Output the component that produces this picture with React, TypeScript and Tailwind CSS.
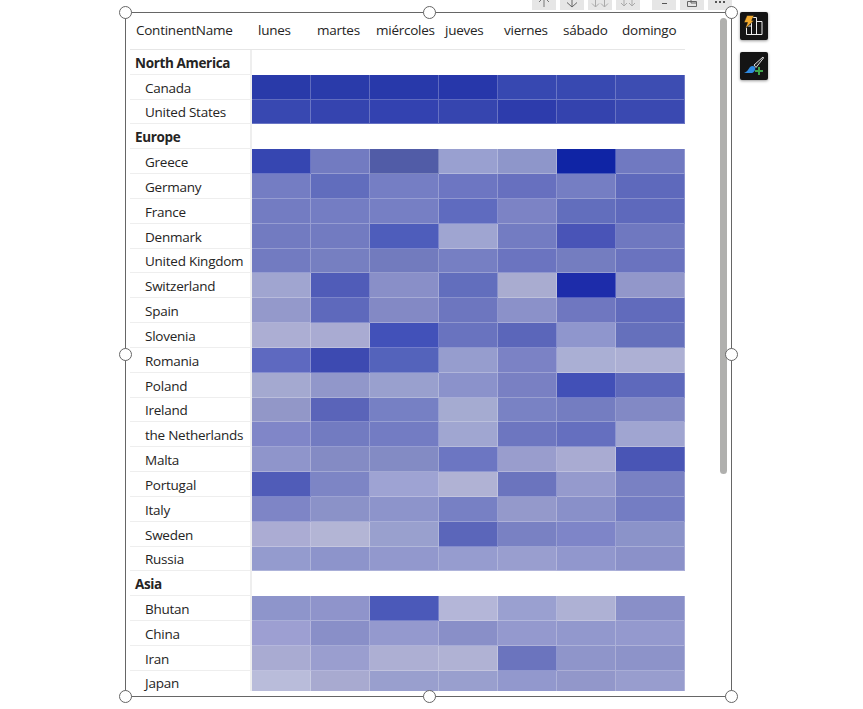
const days = [
  { name: "lunes", w: "w-[59px]" },
  { name: "martes", w: "w-[59px]" },
  { name: "miércoles", w: "w-[69px]" },
  { name: "jueves", w: "w-[59px]" },
  { name: "viernes", w: "w-[59px]" },
  { name: "sábado", w: "w-[59px]" },
  { name: "domingo", w: "w-[69px]" },
];

type Row = { label: string; group?: boolean; cells?: string[] };

const rows: Row[] = [
  { label: "North America", group: true },
  { label: "Canada", cells: ["#2b3a9f", "#2c3ba0", "#2a39a0", "#2937a0", "#3948a8", "#3a49a8", "#3f4da9"] },
  { label: "United States", cells: ["#3a48a8", "#3744a6", "#3542a6", "#3845a6", "#2f3ca2", "#3643a5", "#3c49a8"] },
  { label: "Europe", group: true },
  { label: "Greece", cells: ["#3846a8", "#737bbb", "#525ca0", "#9aa0cc", "#8f96c5", "#11249a", "#7179bb"] },
  { label: "Germany", cells: ["#757dbd", "#626db6", "#767ebe", "#6e76bb", "#6870b8", "#767ebd", "#5f69b5"] },
  { label: "France", cells: ["#747cbc", "#757dbd", "#777fbe", "#606bb8", "#7d83bf", "#636eb6", "#5f69b5"] },
  { label: "Denmark", cells: ["#737bbb", "#737bbb", "#505db3", "#a0a5cd", "#747cbc", "#4a54ae", "#7078ba"] },
  { label: "United Kingdom", cells: ["#737bbb", "#777fbb", "#737bb8", "#777fbd", "#6c74b9", "#757dba", "#6b73b8"] },
  { label: "Switzerland", cells: ["#a1a5cc", "#515cb0", "#8a8fc3", "#636eb6", "#a9accd", "#1f2d9f", "#9397c6"] },
  { label: "Spain", cells: ["#9599c7", "#5f69b5", "#8489c0", "#6e76b9", "#8c91c4", "#7077ba", "#626bb5"] },
  { label: "Slovenia", cells: ["#acaed0", "#a9abcf", "#4451b0", "#6a73b8", "#5c66b3", "#9096c8", "#6670b5"] },
  { label: "Romania", cells: ["#5f69b8", "#3f4aa8", "#5663b3", "#979dca", "#7c82bf", "#abafd1", "#adb0d1"] },
  { label: "Poland", cells: ["#a5a9cd", "#9297c6", "#9aa0ca", "#8c92c6", "#7a80bd", "#4450ae", "#5f69b5"] },
  { label: "Ireland", cells: ["#9397c4", "#5b64b2", "#7780be", "#a6abce", "#7a82be", "#757dbb", "#8389c0"] },
  { label: "the Netherlands", cells: ["#8186c2", "#737bbb", "#747cbd", "#a1a6cd", "#6e76ba", "#666fb8", "#a1a5cd"] },
  { label: "Malta", cells: ["#9095c6", "#858bbf", "#848bbf", "#6d76bb", "#9a9dc9", "#a9abcf", "#4a55ad"] },
  { label: "Portugal", cells: ["#515cb0", "#7e85bf", "#9fa3cf", "#b0b2d1", "#6c74b8", "#969ac9", "#7a81bd"] },
  { label: "Italy", cells: ["#7f85c0", "#8c92c3", "#8e94c6", "#7880be", "#9599c7", "#8a90c4", "#757dbd"] },
  { label: "Sweden", cells: ["#abacd0", "#b3b5d2", "#9aa0ca", "#5c66b3", "#7a81bd", "#7f85c2", "#8c93c4"] },
  { label: "Russia", cells: ["#959bca", "#8e94c6", "#9398c8", "#979ccb", "#9a9ecb", "#9297c8", "#8c91c4"] },
  { label: "Asia", group: true },
  { label: "Bhutan", cells: ["#8f95c6", "#9094c6", "#4d59b1", "#b4b6d5", "#9ba0cc", "#aeb1d1", "#8a8fc3"] },
  { label: "China", cells: ["#9d9fce", "#8a8fc3", "#9599c9", "#8a8fc3", "#9599c9", "#9398c8", "#9599c9"] },
  { label: "Iran", cells: ["#a9abcf", "#9b9ecb", "#adafd0", "#b0b2d1", "#6c74b8", "#9095c5", "#8e93c4"] },
  { label: "Japan", cells: ["#b9bcd7", "#a8aacd", "#9a9fca", "#9a9fca", "#9398c8", "#9397c6", "#999dca"] },
];

function Handle({ pos }: { pos: string }) {
  return <div className={`absolute size-[13px] rounded-full border border-[#666] bg-white ${pos}`} />;
}

function ToolButton({ children }: { children?: React.ReactNode }) {
  return <div className="flex h-[10px] w-6 items-start justify-center overflow-hidden bg-[#e6e6e6]">{children}</div>;
}

function Toolbar() {
  return (
    <div className="absolute top-[-13px] right-[-1px] flex gap-1">
      <ToolButton>
        <svg width="14" height="10" viewBox="0 0 14 10" fill="none" stroke="#777" strokeWidth="1">
          <path d="M7 7V-3M2 2l5-5 5 5" />
        </svg>
      </ToolButton>
      <ToolButton>
        <svg width="14" height="10" viewBox="0 0 14 10" fill="none" stroke="#666" strokeWidth="1">
          <path d="M7 -2v9M2 2.500L7 7l5-4.500" />
        </svg>
      </ToolButton>
      <ToolButton>
        <svg width="18" height="10" viewBox="0 0 18 10" fill="none" stroke="#aaa" strokeWidth="1">
          <path d="M4.500 -2v9M1 3.500L4.500 7 8 3.500M13.500 -2v9M10 3.500L13.500 7 17 3.500" />
        </svg>
      </ToolButton>
      <ToolButton>
        <svg width="16" height="10" viewBox="0 0 16 10" fill="none" stroke="#aaa" strokeWidth="1">
          <path d="M4 -2v8M1 3l3 3 3-3M12 -2v8M9 3l3 3 3-3" />
        </svg>
      </ToolButton>
      <div className="w-1" />
      <ToolButton>
        <div className="mt-[3px] h-px w-[5px] bg-[#555]" />
      </ToolButton>
      <ToolButton>
        <svg width="14" height="10" viewBox="0 0 14 10" fill="none" stroke="#666" strokeWidth="1">
          <path d="M2.500 1.500h9v5h-9zM6 -1v4h5.500" />
        </svg>
      </ToolButton>
      <ToolButton>
        <div className="mt-px flex gap-[2px]">
          <div className="size-[2px] bg-[#555]" />
          <div className="size-[2px] bg-[#555]" />
          <div className="size-[2px] bg-[#555]" />
        </div>
      </ToolButton>
    </div>
  );
}

function SmartIcon() {
  return (
    <svg width="22" height="24" viewBox="0 0 22 24" fill="none">
      <path d="M3.500 20.500V12h5V3.500h5v17M8.500 12v8.500M13.500 7.500h5.500v13M3.500 20.500H19" stroke="#eee" strokeWidth="1" />
      <path d="M4 1.500h7L8.500 6.500H11L2.500 14.500 4.500 8.500H1z" fill="#f0a92e" stroke="#141414" strokeWidth=".5" />
    </svg>
  );
}

function FormatIcon() {
  return (
    <svg width="24" height="22" viewBox="0 0 24 22" fill="none">
      <path d="M21 2L12 10l2 2.500L21.500 3z" stroke="#ddd" strokeWidth="1" fill="#222" />
      <path d="M2 18c3-1 4-3 6-6 1.500-1.500 4-1.500 5 .5 1 2-1 5-3 5.500z" fill="#2f8ae0" />
      <path d="M13 16h8M17 12v8" stroke="#3fa54a" strokeWidth="2" />
    </svg>
  );
}

export default function App() {
  return (
    <div className="relative h-[709px] w-[863px] overflow-hidden bg-white pt-3 pl-[125px] text-[13.5px] text-[#252423] [font-family:'Open_Sans',sans-serif]">
      <div className="flex items-start">
        {/* visual frame */}
        <div className="relative h-[685px] w-[607px] border border-[#666]">
          <Toolbar />
          <div className="ml-1 h-[678px] w-[555px] overflow-hidden">
            <div className="flex h-[37px] items-center border-b border-[#e6e6e6] pb-[2px]">
              <div className="w-[122px] pl-1.5 tracking-[-0.25px]">ContinentName</div>
              {days.map((d) => (
                <div key={d.name} className={`${d.w} pl-1.5 tracking-[-0.25px]`}>
                  {d.name}
                </div>
              ))}
            </div>
            {rows.map((r) => (
              <div key={r.label} className="flex h-[24.84px]">
                <div
                  className={`flex w-[122px] shrink-0 items-center border-r-2 border-b border-[#eeeeee] pt-[2px] ${
                    r.group ? "pl-[5px] font-bold tracking-[-0.35px]" : "pl-[15px] tracking-[-0.25px]"
                  }`}
                >
                  {r.label}
                </div>
                {r.cells &&
                  days.map((d, i) => (
                    <div
                      key={d.name}
                      className={`${d.w} border-r border-b border-white/25 saturate-[1.1]`}
                      style={{ backgroundColor: r.cells![i] }}
                    />
                  ))}
              </div>
            ))}
          </div>

          {/* scrollbar */}
          <div className="absolute top-[5px] right-[4px] h-[456px] w-[7px] rounded-full bg-[#b0b0ae]" />

          <Handle pos="top-[-7px] left-[-7px]" />
          <Handle pos="top-[-7px] left-[297px]" />
          <Handle pos="top-[-7px] right-[-7px]" />
          <Handle pos="top-[335px] left-[-7px]" />
          <Handle pos="top-[335px] right-[-7px]" />
          <Handle pos="bottom-[-7px] left-[-7px]" />
          <Handle pos="bottom-[-7px] left-[297px]" />
          <Handle pos="bottom-[-7px] right-[-7px]" />
        </div>

        {/* side buttons */}
        <div className="ml-2 flex flex-col gap-3">
          <div className="flex size-7 items-center justify-center rounded-[2px] bg-[#141414] shadow-[0_1px_3px_rgba(0,0,0,0.4)]">
            <SmartIcon />
          </div>
          <div className="flex size-7 items-center justify-center rounded-[2px] bg-[#141414] shadow-[0_1px_3px_rgba(0,0,0,0.4)]">
            <FormatIcon />
          </div>
        </div>
      </div>
    </div>
  );
}
